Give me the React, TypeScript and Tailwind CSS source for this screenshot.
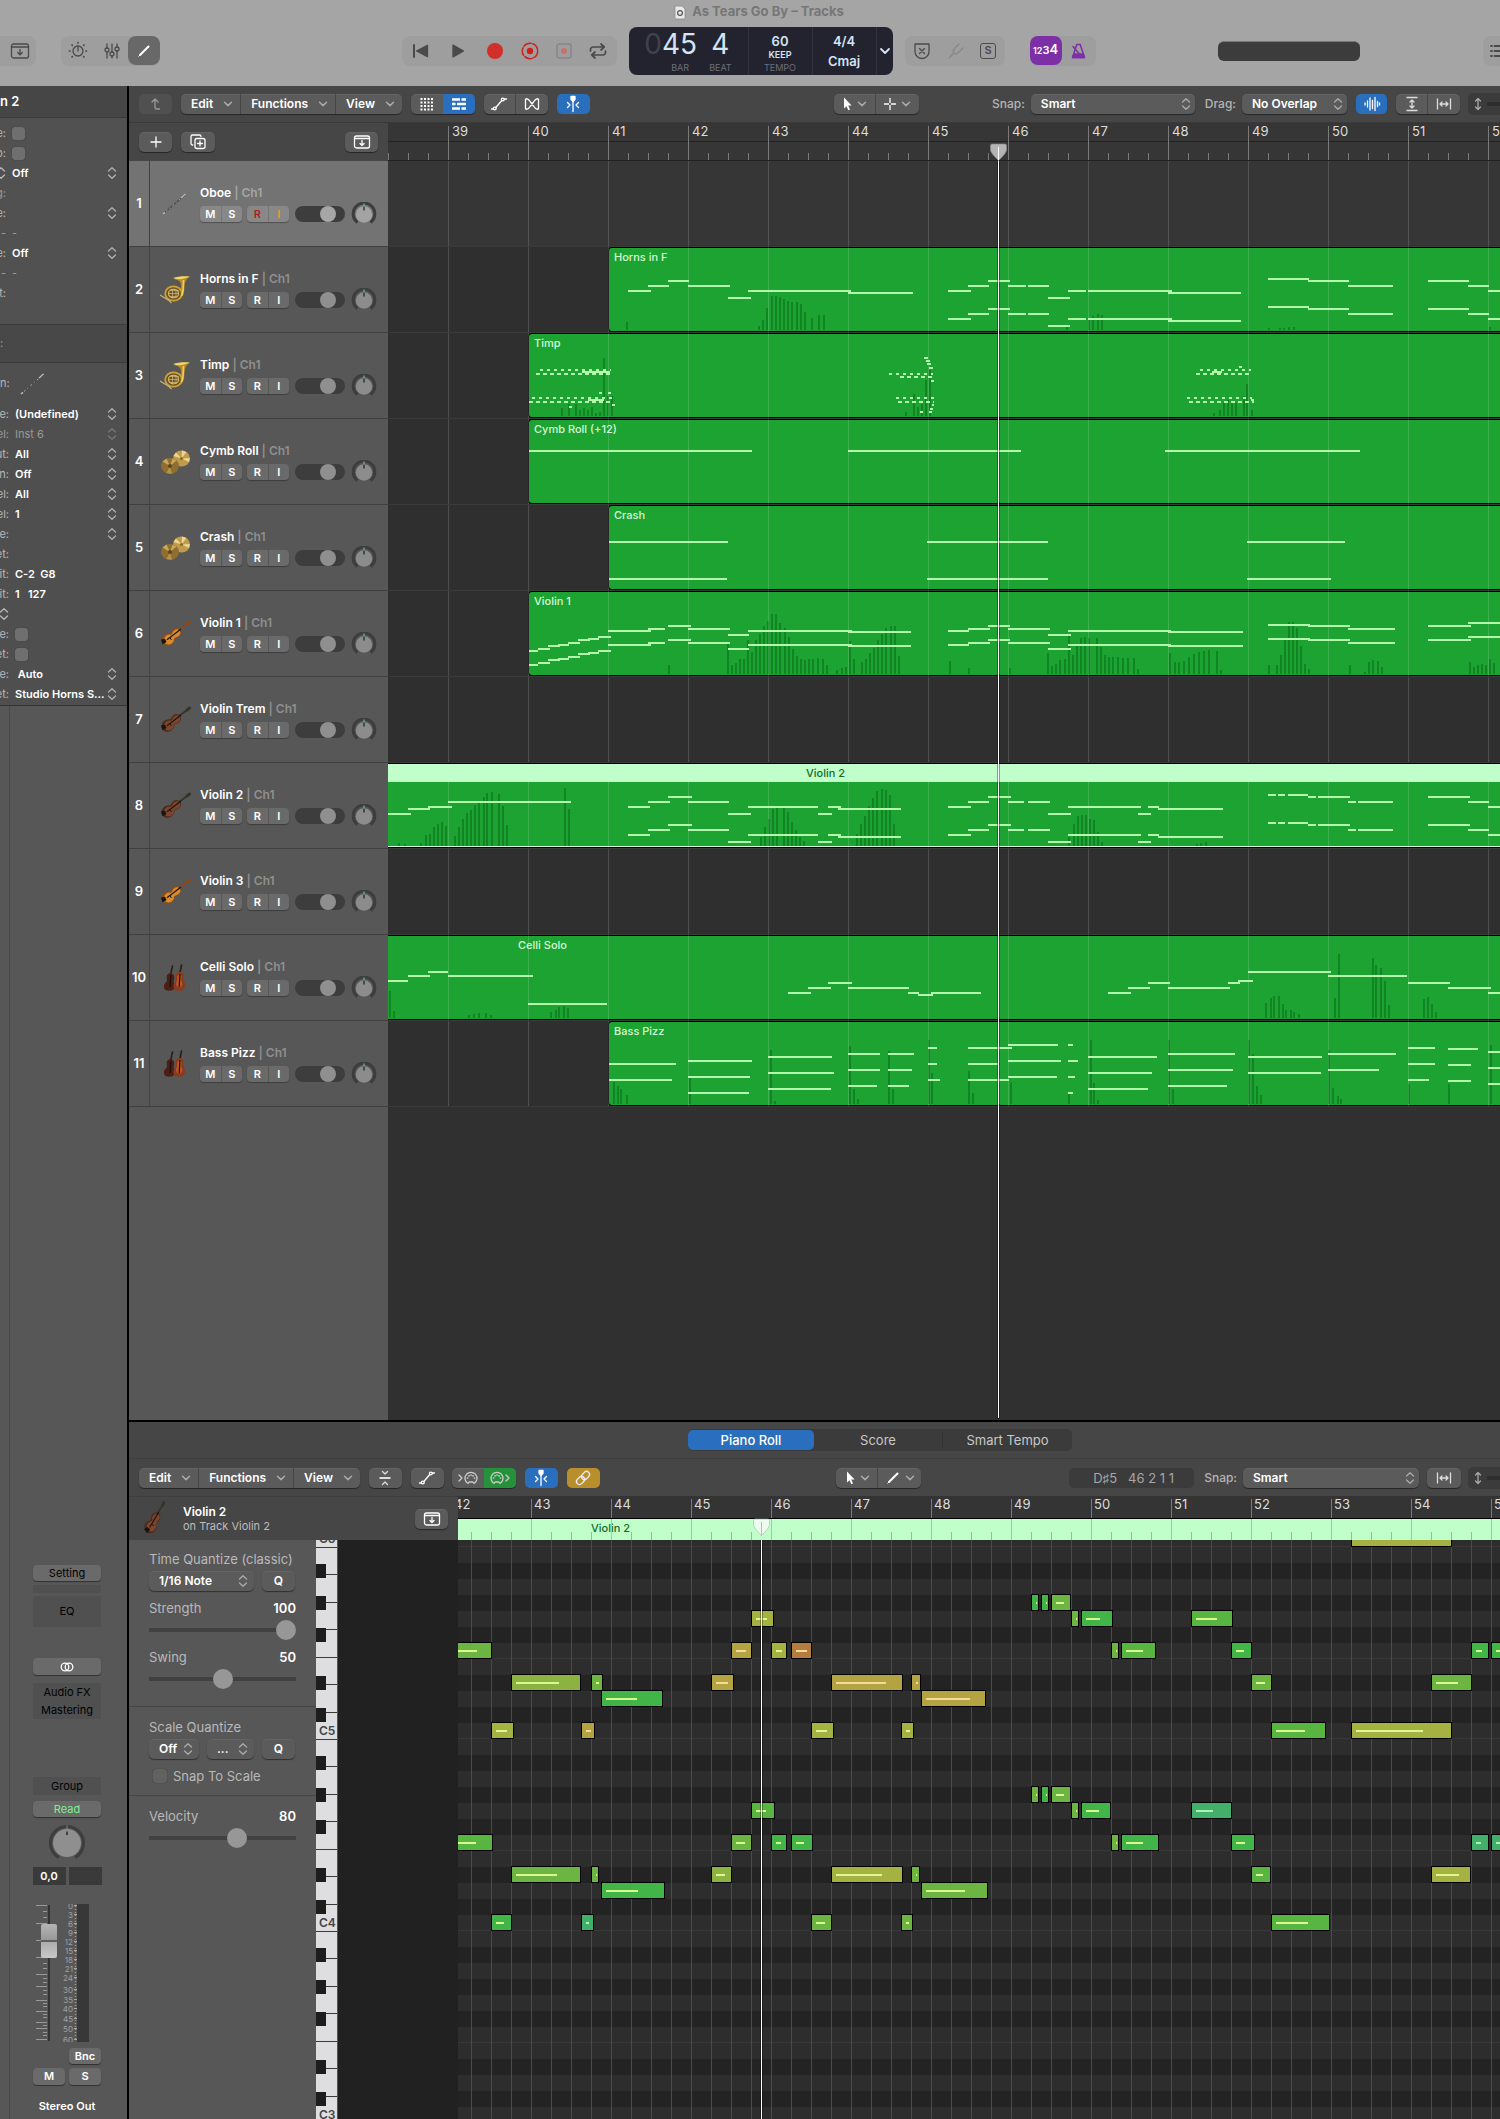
import React from 'react';

type Seg = [number, number, number];
type Bar = [number, number];

interface Track {
  name: string;
  icon: 'oboe' | 'horn' | 'cymbals' | 'violin' | 'darkViolin' | 'celli';
  region?: { label: string; start: number; labelAt?: number; selected?: boolean };
  notes?: Seg[];
  bars?: Bar[];
  dashes?: Seg[];
}

const double = (notes: Seg[], dy: number): Seg[] => [...notes, ...notes.map(([a, b, y]): Seg => [a, b, y + dy])];

const hornsTail: Seg[] = [
  [560, 583, 44], [580, 601, 39], [600, 622, 34], [620, 638, 39], [640, 661, 39], [660, 682, 51], [680, 698, 44],
  [700, 784, 44], [780, 853, 46], [880, 921, 32], [920, 961, 34], [960, 1005, 39], [1040, 1081, 34], [1080, 1101, 39], [1100, 1120, 44],
];

const violin1: Seg[] = [
  [141, 150, 60], [150, 162, 58], [160, 172, 55], [170, 181, 54], [180, 192, 52], [190, 202, 49], [200, 211, 48], [210, 223, 46],
  [220, 263, 40], [260, 277, 38], [280, 303, 35], [300, 342, 38], [340, 361, 44], [360, 464, 40], [460, 523, 41],
  [560, 581, 40], [580, 602, 38], [600, 622, 35], [620, 662, 38], [660, 683, 44], [680, 783, 40], [780, 855, 41],
  [880, 922, 34], [920, 962, 35], [960, 1007, 38], [1040, 1083, 35], [1080, 1120, 32],
];

const violin2: Seg[] = [
  [240, 262, 44], [260, 282, 39], [280, 304, 34], [300, 341, 39], [340, 363, 51], [360, 430, 44], [430, 444, 51], [440, 453, 44], [450, 513, 46],
  [560, 583, 44], [580, 601, 39], [600, 623, 34], [620, 636, 39], [640, 662, 39], [660, 683, 51], [680, 753, 44], [750, 763, 51], [760, 771, 44], [770, 835, 46],
  [880, 888, 32], [890, 897, 32], [900, 920, 32], [920, 928, 34], [930, 962, 34], [960, 968, 39], [970, 1005, 39],
  [1040, 1082, 34], [1080, 1101, 39], [1100, 1120, 44],
];

const tracks: Track[] = [
  { name: 'Oboe', icon: 'oboe' },
  {
    name: 'Horns in F',
    icon: 'horn',
    region: { label: 'Horns in F', start: 220 },
    notes: [[240, 263, 44], [260, 281, 39], [280, 301, 34], [300, 342, 39], [340, 363, 51], [360, 463, 44], [460, 525, 46], ...double(hornsTail, 28)],
    bars: [
      [239, 8], [371, 4], [375, 10], [379, 22], [384, 34], [388, 34], [392, 33], [396, 31], [400, 29], [404, 28], [409, 28], [413, 26], [417, 18],
      [424, 12], [431, 15], [436, 15], [679, 3], [701, 12], [705, 14], [710, 16], [714, 15], [881, 2], [892, 2], [896, 2], [901, 3], [906, 3], [1102, 3],
    ],
  },
  {
    name: 'Timp',
    icon: 'horn',
    region: { label: 'Timp', start: 140 },
    dashes: [
      [152, 223, 37], [148, 223, 41], [144, 224, 65], [141, 225, 69], [501, 545, 41], [512, 545, 44], [508, 546, 65], [510, 546, 69],
      [812, 863, 37], [808, 862, 41], [799, 864, 65], [801, 866, 69],
    ],
    notes: [
      [194, 222, 39], [211, 214, 60], [220, 223, 60], [200, 216, 67], [224, 227, 72], [181, 184, 74], [536, 540, 25], [538, 542, 28], [539, 543, 31],
      [541, 545, 35], [543, 546, 48], [544, 546, 72], [542, 545, 76], [532, 535, 79], [541, 544, 79], [824, 834, 39], [851, 854, 34], [863, 866, 67],
    ],
    bars: [
      [174, 8], [181, 12], [188, 12], [192, 6], [196, 8], [200, 6], [204, 9], [208, 3], [212, 4], [216, 58], [220, 20], [224, 20],
      [518, 4], [526, 22], [530, 9], [534, 12], [538, 36], [542, 46], [826, 3], [832, 6], [836, 14], [840, 16], [844, 14], [848, 13], [856, 20], [859, 32], [864, 6],
    ],
  },
  { name: 'Cymb Roll', icon: 'cymbals', region: { label: 'Cymb Roll (+12)', start: 140 }, notes: [[141, 364, 32], [460, 633, 32], [777, 972, 32]] },
  {
    name: 'Crash',
    icon: 'cymbals',
    region: { label: 'Crash', start: 220 },
    notes: [[221, 340, 37], [221, 339, 74], [539, 660, 37], [539, 660, 74], [859, 957, 37], [859, 943, 74]],
  },
  {
    name: 'Violin 1',
    icon: 'violin',
    region: { label: 'Violin 1', start: 140 },
    notes: double(violin1, 14),
    bars: [
      [281, 9], [340, 32], [344, 9], [348, 11], [352, 15], [356, 15], [360, 34], [364, 22], [368, 34], [372, 40], [376, 48], [380, 53], [384, 60], [388, 60],
      [392, 51], [397, 46], [401, 37], [405, 25], [409, 18], [413, 15], [417, 14], [421, 15], [425, 15], [430, 16], [435, 15], [439, 9], [449, 4], [454, 6], [458, 7],
      [462, 33], [466, 15], [474, 12], [478, 15], [482, 21], [486, 26], [490, 34], [494, 40], [498, 46], [503, 48], [507, 48], [511, 18],
      [562, 13], [581, 6], [622, 6], [660, 21], [664, 8], [668, 10], [672, 14], [677, 15], [681, 38], [685, 19], [689, 28], [693, 36], [697, 37], [701, 36],
      [709, 36], [713, 27], [717, 19], [721, 17], [725, 17], [730, 17], [735, 16], [740, 16], [746, 16], [750, 5], [782, 21], [787, 12], [791, 12], [796, 13],
      [801, 17], [806, 20], [811, 22], [816, 23], [821, 24], [829, 23], [833, 4], [881, 9], [889, 9], [893, 19], [897, 36], [901, 52], [905, 52], [909, 46],
      [913, 28], [917, 10], [921, 5], [962, 9], [977, 2], [981, 12], [985, 14], [990, 13], [994, 7], [1082, 12], [1086, 7], [1090, 9], [1094, 10], [1098, 9], [1102, 15], [1106, 11],
    ],
  },
  { name: 'Violin Trem', icon: 'darkViolin' },
  {
    name: 'Violin 2',
    icon: 'darkViolin',
    region: { label: 'Violin 2', start: 0, labelAt: 418, selected: true },
    notes: [[0, 23, 51], [20, 42, 46], [40, 64, 44], [60, 183, 39], ...double(violin2, 28)],
    bars: [
      [11, 3], [17, 2], [33, 3], [38, 11], [42, 12], [46, 19], [50, 22], [54, 24], [58, 20], [67, 10], [71, 19], [75, 27], [79, 33], [83, 36], [87, 41], [91, 43], [96, 49], [99, 53],
      [104, 54], [111, 52], [115, 40], [119, 21], [177, 58], [181, 37], [373, 9], [377, 19], [381, 27], [385, 37], [389, 38], [396, 38], [400, 34], [404, 24],
      [408, 16], [412, 9], [416, 5], [469, 12], [473, 22], [477, 30], [481, 40], [485, 48], [489, 55], [494, 57], [498, 56], [502, 51], [506, 22],
      [681, 9], [686, 22], [690, 30], [694, 31], [698, 31], [702, 27], [706, 26], [710, 14], [714, 4], [809, 2], [813, 3], [818, 4],
    ],
  },
  { name: 'Violin 3', icon: 'violin' },
  {
    name: 'Celli Solo',
    icon: 'celli',
    region: { label: 'Celli Solo', start: 0, labelAt: 130 },
    notes: [
      [0, 20, 46], [20, 42, 41], [40, 60, 37], [60, 145, 41], [140, 219, 69], [400, 423, 58], [420, 443, 53], [440, 464, 48], [460, 521, 53], [520, 531, 58],
      [530, 545, 60], [543, 593, 58], [720, 743, 58], [740, 762, 53], [760, 782, 48], [780, 842, 53], [840, 852, 48], [850, 865, 46], [860, 943, 37],
      [940, 1019, 41], [1020, 1062, 48], [1060, 1103, 53], [1100, 1120, 58],
    ],
    bars: [
      [2, 27], [6, 7], [81, 3], [86, 4], [91, 5], [98, 5], [103, 3], [163, 6], [168, 8], [171, 11], [176, 12], [180, 10], [878, 15], [883, 20], [886, 22],
      [891, 22], [895, 14], [898, 8], [903, 8], [906, 6], [911, 4], [947, 20], [951, 64], [985, 60], [988, 53], [993, 50], [997, 37], [1001, 13],
      [1036, 19], [1040, 21], [1044, 14], [1048, 6],
    ],
  },
  {
    name: 'Bass Pizz',
    icon: 'celli',
    region: { label: 'Bass Pizz', start: 220 },
    notes: [
      [221, 288, 43], [221, 284, 59], [300, 364, 40], [300, 362, 56], [300, 361, 72], [380, 444, 36], [380, 446, 52], [380, 443, 68],
      [460, 492, 33], [460, 492, 49], [460, 489, 65], [500, 526, 33], [500, 524, 49], [500, 521, 65], [540, 549, 27], [540, 549, 43], [540, 552, 59],
      [580, 624, 27], [580, 610, 43], [580, 621, 59], [620, 670, 24], [620, 673, 40], [620, 669, 56], [680, 685, 24], [680, 690, 40], [680, 687, 56], [680, 685, 72],
      [700, 769, 36], [700, 764, 52], [700, 760, 68], [780, 847, 33], [780, 845, 49], [780, 839, 65], [860, 934, 36], [860, 933, 52],
      [940, 1008, 33], [940, 991, 49], [1020, 1047, 27], [1020, 1047, 43], [1020, 1041, 59], [1060, 1090, 28], [1060, 1083, 44], [1060, 1083, 60],
      [1100, 1120, 31], [1100, 1120, 47], [1100, 1120, 63],
    ],
    bars: [
      [226, 22], [230, 18], [233, 15], [239, 9], [302, 26], [383, 54], [387, 3], [462, 58], [466, 15], [470, 5], [501, 53], [505, 15], [541, 64], [544, 31], [581, 33], [585, 11],
      [623, 22], [681, 11], [703, 64], [706, 21], [710, 4], [781, 64], [785, 15], [861, 64], [865, 50], [869, 18], [873, 9], [941, 54], [945, 16],
      [950, 8], [953, 5], [1021, 20], [1061, 20], [1103, 59],
    ],
  },
];

const barNumbers = (first: number, count: number) => Array.from({ length: count }, (_, i) => first + i);

/* ---------- icons ---------- */

const Icon: React.FC<{ w?: number; h?: number; className?: string; children: React.ReactNode }> = ({ w = 18, h = 18, className = '', children }) => (
  <svg width={w} height={h} viewBox={`0 0 ${w} ${h}`} fill="none" stroke="currentColor" strokeWidth="1.3" strokeLinecap="round" strokeLinejoin="round" className={`shrink-0 ${className}`} aria-hidden="true">
    {children}
  </svg>
);

const Chevron = () => <Icon w={10} h={8} className="text-[#aaa]"><path d="M1.5 2.2 5 5.6l3.5-3.4" strokeWidth="1.5" /></Icon>;
const Stepper = ({ className = '' }: { className?: string }) => (
  <Icon w={10} h={14} className={`pointer-events-none ${className}`}><path d="M1.5 5 5 1.8 8.5 5M1.5 9 5 12.2 8.5 9" /></Icon>
);
const LibraryIcon = () => <Icon w={20} h={18}><rect x="1.5" y="2" width="17" height="14" rx="2" /><path d="M1.5 5h17M10 7.5v5M7.8 10.5l2.2 2.2 2.2-2.2" /></Icon>;
const ArchiveIcon = () => <Icon w={20} h={18}><rect x="2.5" y="3" width="15" height="12" rx="2" /><path d="M2.5 5.5h15M10 7.5v5M8 10.5l2 2 2-2" /></Icon>;
const PointerIcon = () => <Icon w={12} h={16}><path d="M3 1.5v11l2.5-2.3 1.8 4 1.7-.8-1.8-3.9h3.4z" fill="currentColor" stroke="none" /></Icon>;
const PencilIcon = () => <Icon w={16} h={16}><path d="M4 12 12.5 3.5" strokeWidth="2" /><path d="m2.8 13.2 1.2-1.2" strokeWidth="1" /></Icon>;
const AutomationIcon = () => <Icon><path d="M1.5 14h2M5.8 12.5 11.8 5.5M14.2 4h2.3" /><circle cx="4.8" cy="13.5" r="1.4" /><circle cx="12.8" cy="4.5" r="1.4" /></Icon>;
const CatchIcon = () => <Icon><path d="M9 3v13.5M3.5 7.5 6 10l-2.5 2.5M14.5 7.5 12 10l2.5 2.5" /><path d="M7 1.5h4v2.7L9 6.5 7 4.2z" fill="currentColor" /></Icon>;
const WidthIcon = () => <Icon><path d="M2.5 4v10M15.5 4v10M5 9h8M7 7 5 9l2 2M11 7l2 2-2 2" /></Icon>;
const UpDownIcon = () => <Icon w={10} h={16}><path d="M5 2.5v11M2.5 5 5 2.5 7.5 5M2.5 11 5 13.5 7.5 11" /></Icon>;

const Violin: React.FC<{ body: string; edge: string; neck: string }> = ({ body, edge, neck }) => (
  <svg width="32" height="28" viewBox="0 0 32 28" aria-hidden="true">
    <path d="M14 14.5 29.5 3" stroke={neck} strokeWidth="1.8" strokeLinecap="round" />
    <path d="m28 4 2.5-2" stroke={neck} strokeWidth="3" strokeLinecap="round" />
    <g fill={edge}>
      <ellipse cx="9" cy="19.5" rx="6.8" ry="6" transform="rotate(-38 9 19.5)" />
      <ellipse cx="17" cy="13" rx="5.3" ry="4.6" transform="rotate(-38 17 13)" />
      <ellipse cx="13" cy="16.3" rx="4" ry="3.5" transform="rotate(-38 13 16.3)" />
    </g>
    <g fill={body}>
      <ellipse cx="10" cy="19.5" rx="5.2" ry="4.8" transform="rotate(-38 10 19.5)" />
      <ellipse cx="17.3" cy="13.3" rx="4.1" ry="3.5" transform="rotate(-38 17.3 13.3)" />
      <ellipse cx="14" cy="16.3" rx="3.2" ry="2.6" transform="rotate(-38 14 16.3)" />
    </g>
    <path d="M8 19.7 22 9" stroke="#1f1612" strokeWidth="1.2" />
    <path d="m2 19.5 4-.8 1.5 3.300-4 2.300z" fill="#191412" />
    <path d="m10.500 17 2 3" stroke="#2b1a10" strokeWidth="1" />
  </svg>
);

const Instrument: React.FC<{ kind: Track['icon'] }> = ({ kind }) => {
  if (kind === 'violin') return <Violin body="#d98a2c" edge="#8f4d15" neck="#8a4a1c" />;
  if (kind === 'darkViolin') return <Violin body="#7c452c" edge="#4b291c" neck="#34352a" />;
  if (kind === 'oboe')
    return (
      <svg width="32" height="28" viewBox="0 0 32 28" aria-hidden="true">
        <path d="M4 24 27 4" stroke="#4a4a4c" strokeWidth="1.6" />
        <path d="M4 24 27 4" stroke="#b5b5b8" strokeWidth="1" strokeDasharray="1 3 2 2.5" />
        <path d="m22 8 4.5-4" stroke="#bdbdbf" strokeWidth="1.2" />
        <path d="m4 24 2-1.700" stroke="#bdbdbf" strokeWidth="1.6" />
      </svg>
    );
  if (kind === 'horn')
    return (
      <svg width="32" height="30" viewBox="0 0 32 30" fill="none" aria-hidden="true">
        <path d="M15 4c4-2 11-2 16-2-3 1-4 3-5 6-1 4 0 11-3 14-2 3-6 3-8 2 4-4 7-9 7-14 0-3-2-5-7-6z" stroke="none" fill="#b98a22" />
        <path d="M14 3C18 1.300 26 1 31 1.500c-3 1-5 2-8 2.500-3 .4-6 .2-9-1z" fill="#f2d766" />
        <ellipse cx="14.5" cy="18.5" rx="8.3" ry="7.2" fill="#6a5628" stroke="#cfa034" strokeWidth="1.8" />
        <ellipse cx="14.5" cy="18.5" rx="5" ry="4.3" stroke="#d9bf74" strokeWidth="1.1" />
        <path d="M10 15.5h10M9.5 18.5h10M10.5 21.5h8M13.5 14v9.5M17 14v9" stroke="#c8ad70" strokeWidth=".8" />
        <path d="m1 20 9 5.5 2.5 2.5" stroke="#c4b283" strokeWidth="1.2" />
        <path d="M24.5 5c-.5 5.5.5 11-2 16" stroke="#efcf58" strokeWidth="1.6" />
      </svg>
    );
  if (kind === 'cymbals')
    return (
      <svg width="32" height="28" viewBox="0 0 32 28" aria-hidden="true">
        <ellipse cx="22.5" cy="10.5" rx="8.5" ry="8" fill="#bf9b4b" />
        <path d="m22.500 10.500-8-2.500 2.500-3.500 5.500 6 .5-8 4.500 1.500-5 6.500 8.300-.5-.8 4z" fill="#ead592" />
        <circle cx="22.5" cy="10.5" r="1.6" fill="#8b6a24" />
        <ellipse cx="11" cy="18" rx="9" ry="8" fill="#8f6f31" />
        <path d="m11 18-7.500-4.500 4-3L11 18l2.500-7.500 4 2z" fill="#c8a75b" />
        <path d="M11 18 7.500 25l5.500 1z" fill="#b5924a" />
        <circle cx="11" cy="18" r="2" fill="#5f4618" />
      </svg>
    );
  return (
    <svg width="32" height="30" viewBox="0 0 32 30" aria-hidden="true">
      <path d="M11.5 12 13.5 3M20.5 12 22.5 2" stroke="#2b1d17" strokeWidth="1.6" strokeLinecap="round" />
      <path d="M9 11c3-2 5-1 6 2s-1 4 0 7 1 7-3 7.500-7 0-7-4 3-3.500 3-6.500-1-4 1-6z" fill="#4b1f14" />
      <path d="M18 10c3-2 6-1 6.500 1s-1 4 0 6.500c2 3 2.500 8-1 9.500s-8.500 1-9-3 2.500-5 2.500-7.500-1-4.500 1-6.500z" fill="#8c391d" />
      <path d="M19.200 12c1.500-1 3 0 3.300 1.500s-1 2.500 0 4.500 1.500 5-1 6-4.500-.5-4.500-3 1.700-3.500 1.200-5 0-3 1-4z" fill="#b85628" />
      <path d="m21 11-.8 13M12 12l-1 12" stroke="#1a100c" strokeWidth="1.2" />
    </svg>
  );
};

/* ---------- shared controls ---------- */

const raised = 'bg-[#5b5b5b] shadow-[0_1px_1px_rgba(0,0,0,0.45),inset_0_1px_0_rgba(255,255,255,0.06)] rounded-[5px]';
const stripButton = 'bg-[#6a6a6a] shadow-[0_1px_1px_rgba(0,0,0,0.45)] rounded-[4px]';

const ToolButton: React.FC<{ label: string; className?: string; children: React.ReactNode }> = ({ label, className = '', children }) => (
  <button aria-label={label} className={`flex h-5 items-center justify-center ${className}`}>{children}</button>
);

const MenuBar = () => (
  <div className={`flex divide-x divide-[#474747] ${raised}`}>
    {['Edit', 'Functions', 'View'].map(m => (
      <button key={m} className="flex h-5 items-center gap-2.5 pl-[10px] pr-[7px] text-xs font-semibold text-white">
        {m}
        <Chevron />
      </button>
    ))}
  </div>
);

const Picker: React.FC<{ label: string; value: string; className?: string; arrows?: string }> = ({ label, value, className = '', arrows = 'right-1' }) => (
  <span className={`relative flex h-5 items-center ${raised} ${className}`}>
    <select aria-label={label} className="h-full w-full appearance-none bg-transparent pl-[10px] text-xs font-semibold text-white outline-none">
      <option>{value}</option>
    </select>
    <Stepper className={`absolute text-[#aaa] ${arrows}`} />
  </span>
);

const PointerTools: React.FC<{ second: React.ReactNode }> = ({ second }) => (
  <div className={`flex divide-x divide-[#474747] text-white ${raised}`}>
    <ToolButton label="Left-click tool" className="w-[42px] gap-1"><PointerIcon /><Chevron /></ToolButton>
    <ToolButton label="Command-click tool" className="w-[43px] gap-1">{second}<Chevron /></ToolButton>
  </div>
);

const ZoomSlider = () => (
  <div className="flex h-[22px] w-8 shrink-0 items-center gap-1 rounded-l-[5px] bg-[#3b3b3b] pl-[5px] text-[#aaa]">
    <UpDownIcon />
    <span className="h-1 flex-1 bg-[#2d2d2d]" />
  </div>
);

const Knob: React.FC<{ bright?: boolean }> = ({ bright }) => (
  <svg width="26" height="24" viewBox="0 0 26 24" className="shrink-0" aria-hidden="true">
    <path d="M6.5 20.5A10.8 10.8 0 1 1 19.5 20.5" fill="none" stroke="#3d3d3d" strokeWidth="3" />
    <circle cx="13" cy="12.5" r="8.3" fill={bright ? '#a3a3a3' : '#8c8c8c'} />
    <path d="M13 1.5V5" stroke="#7fc9ae" strokeWidth="1" />
    <path d="M13 4.5V8.5" stroke="#111" strokeWidth="1.1" />
  </svg>
);

/* ---------- top bar ---------- */

const TopBar = () => (
  <header className="flex h-[86px] shrink-0 flex-col bg-[#a5a5a5] text-[#4a4a4a]">
    <div className="flex h-6 items-center justify-center gap-1.5 pl-[18px] text-[13px] font-bold text-[#767676]">
      <svg width="12" height="15" viewBox="0 0 12 15" aria-hidden="true"><path d="M1 1h7l3 3v10H1z" fill="#e9e9e9" stroke="#8b8b8b" strokeWidth=".8" /><circle cx="6" cy="8" r="2.4" fill="none" stroke="#555" strokeWidth="1.2" /></svg>
      As Tears Go By – Tracks
    </div>
    <div className="flex flex-1 items-center pb-[9px]">
      <div className="flex h-[30px] w-9 items-center justify-center rounded-r-lg bg-[#9e9e9e] pl-1"><ToolButton label="Library"><LibraryIcon /></ToolButton></div>
      <div className="ml-[25px] flex h-[30px] items-center rounded-lg bg-[#9e9e9e]">
        <ToolButton label="Smart Controls" className="w-[34px]">
          <Icon w={20} h={20}><circle cx="10" cy="10" r="5" /><path d="M10 6.5V10" /><path d="M10 1.5v.5M4 4l.3.3M16 4l-.3.3M1.5 10H2M18 10h.5M4 16l.3-.3M16 16l-.3-.3" strokeWidth="1.7" /></Icon>
        </ToolButton>
        <ToolButton label="Mixer" className="w-[33px]">
          <Icon><path d="M4 2v4M4 10v6M9 2v8M9 14v2M14 2v3M14 9v7" /><circle cx="4" cy="8" r="2" /><circle cx="9" cy="12" r="2" /><circle cx="14" cy="7" r="2" /></Icon>
        </ToolButton>
        <button aria-label="Editors" className="flex h-[29px] w-8 items-center justify-center rounded-lg bg-[#686868] text-white"><PencilIcon /></button>
      </div>
      <span className="grow-[61]" />
      <div className="flex h-[30px] items-center justify-around rounded-lg bg-[#9e9e9e] px-0.5">
        <ToolButton label="Go to beginning" className="w-[35px]"><Icon><path d="M2 3v12" strokeWidth="2" /><path d="M15.5 3.2v11.6L4.5 9z" fill="currentColor" /></Icon></ToolButton>
        <ToolButton label="Play" className="w-[38px]"><Icon><path d="M4 3v12l10.5-6z" fill="currentColor" /></Icon></ToolButton>
        <ToolButton label="Record" className="w-[36px]"><Icon><circle cx="9" cy="9" r="8" fill="#d02f2a" stroke="none" /></Icon></ToolButton>
        <ToolButton label="Capture recording" className="w-[34px]"><Icon><circle cx="9" cy="9" r="7.7" stroke="#cf1f1c" strokeWidth="1.5" strokeDasharray="8 1.7" /><circle cx="9" cy="9" r="3.2" fill="#cf1f1c" stroke="none" /></Icon></ToolButton>
        <ToolButton label="Replace" className="w-[34px]"><Icon className="text-[#858585]"><rect x="2" y="2" width="14" height="14" rx="2" /><circle cx="9" cy="9" r="3" fill="#c9716e" stroke="none" /></Icon></ToolButton>
        <ToolButton label="Cycle" className="w-[34px]"><Icon w={20}><path d="M2.5 9V7.5a2.5 2.5 0 0 1 2.5-2.5h11M13 2l3.3 3L13 8M17.5 9v1.5a2.5 2.5 0 0 1-2.5 2.5H4M7 10l-3.3 3L7 16" strokeWidth="1.7" /></Icon></ToolButton>
      </div>
      <div className="ml-3 flex h-12 items-stretch rounded-lg bg-[#22232e] text-[#d4e4f5]">
        <div className="flex w-[120px] justify-center gap-3 border-r border-[#31323d]">
          <div className="flex flex-col items-end">
            <span className="text-[28px] leading-[35px]"><span className="text-[#40424d]">0</span>45</span>
            <span className="pr-2 text-[9px] leading-[11px] text-[#6c6f7b]">BAR</span>
          </div>
          <div className="flex flex-col items-center">
            <span className="text-[28px] leading-[35px]">4</span>
            <span className="text-[9px] leading-[11px] text-[#6c6f7b]">BEAT</span>
          </div>
        </div>
        <div className="flex w-16 flex-col items-center border-r border-[#31323d] pt-1.5">
          <span className="text-[13px] font-semibold leading-4">60</span>
          <span className="text-[9px] font-semibold leading-3">KEEP</span>
          <span className="text-[9px] leading-[14px] text-[#6c6f7b]">TEMPO</span>
        </div>
        <div className="flex w-16 flex-col items-center gap-1 border-r border-[#31323d] pt-1.5 text-[13px] font-semibold leading-4">
          <span>4/4</span>
          <span>Cmaj</span>
        </div>
        <ToolButton label="Display mode" className="w-4 self-center"><Icon w={12} h={12}><path d="m2 4 4 4 4-4" strokeWidth="1.8" /></Icon></ToolButton>
      </div>
      <div className="ml-3 flex h-[30px] items-center rounded-lg bg-[#9e9e9e]">
        <ToolButton label="Replace mode" className="w-[35px]"><Icon><path d="M2 2h14v8c0 4-4 6.5-7 6.5S2 14 2 10zM6.5 6.5l5 5M11.5 6.5l-5 5" /></Icon></ToolButton>
        <ToolButton label="Tuner" className="w-[32px]"><Icon className="text-[#8a8a8a]"><path d="m2 16 5-5M7 11C5.5 9 6 8 7.5 6.5L12 2M7 11c2 1.5 3 1 4.5-.5L16 6" strokeWidth="1.6" /></Icon></ToolButton>
        <ToolButton label="Solo" className="w-[33px]"><span className="flex h-4 w-4 items-center justify-center rounded-[3px] border border-[#4a4a4a] text-[11px] font-semibold">S</span></ToolButton>
      </div>
      <div className="ml-[25px] flex h-[30px] items-center rounded-lg bg-[#9e9e9e]">
        <button aria-label="Count-in" className="flex h-[29px] w-8 items-baseline justify-center rounded-lg bg-[#7d2fa6] pt-1 font-semibold text-white">
          <span className="text-[9px]">12</span><span className="text-[11px]">3</span><span className="text-[13px]">4</span>
        </button>
        <ToolButton label="Metronome" className="w-[34px] text-[#7d2fa6]"><Icon><path d="M6.8 2.5h3.4L14.5 15.5h-12zM3.8 12h9.7" strokeWidth="1.5" /><path d="M3 4.5 9 11.5" strokeWidth="1.5" /><path d="M3.5 13h10.3l.7 2.5h-12z" fill="currentColor" /></Icon></ToolButton>
      </div>
      <span className="grow-[31]" />
      <div className="h-5 w-[142px] rounded-md border-t border-[#777] bg-[#3c3c3c]" />
      <span className="grow-[31]" />
      <div className="flex h-[30px] w-[17px] items-center overflow-hidden rounded-l-lg bg-[#9e9e9e] pl-[7px]">
        <ToolButton label="List editors"><Icon><path d="M1 4h1M1 9h1M1 14h1M4.5 4h12M4.5 9h12M4.5 14h12" strokeWidth="1.8" /></Icon></ToolButton>
      </div>
    </div>
  </header>
);

/* ---------- inspector ---------- */

interface Field {
  label: string;
  value?: string;
  kind?: 'check' | 'select' | 'text';
  dim?: boolean;
}

const regionFields: Field[] = [
  { label: 'e:', kind: 'check' },
  { label: 'p:', kind: 'check' },
  { label: '◊', value: 'Off', kind: 'select' },
  { label: 'g:', dim: true },
  { label: 'e:', value: '', kind: 'select' },
  { label: '-', value: '-', kind: 'text', dim: true },
  { label: 'e:', value: 'Off', kind: 'select' },
  { label: '-', value: '-', kind: 'text', dim: true },
  { label: 't:' },
];

const trackFields: Field[] = [
  { label: 'e:', value: '(Undefined)', kind: 'select' },
  { label: 'el:', value: 'Inst 6', kind: 'select', dim: true },
  { label: 'ut:', value: 'All', kind: 'select' },
  { label: 'n:', value: 'Off', kind: 'select' },
  { label: 'el:', value: 'All', kind: 'select' },
  { label: 'el:', value: '1', kind: 'select' },
  { label: 'e:', value: '', kind: 'select' },
  { label: 'et:' },
  { label: 'it:', value: 'C-2  G8', kind: 'text' },
  { label: 'it:', value: '1   127', kind: 'text' },
  { label: '◊' },
  { label: 'e:', kind: 'check' },
  { label: 'et:', kind: 'check' },
  { label: 'e:', value: '\u00a0Auto', kind: 'select' },
  { label: 'et:', value: 'Studio Horns S...', kind: 'select' },
];

const FieldRow: React.FC<{ field: Field; id: string; labelWidth: string }> = ({ field, id, labelWidth }) => (
  <div className={`flex h-5 items-center gap-1.5 pr-[10px] text-[11px] ${field.dim ? 'text-[#9a9a9a]' : 'text-white'}`}>
    <label htmlFor={id} className={`flex shrink-0 justify-end whitespace-nowrap ${labelWidth} ${field.dim ? '' : 'text-[#b8b8b8]'}`}>
      {field.label === '◊' ? <Stepper /> : field.label}
    </label>
    {field.kind === 'check' && <input id={id} type="checkbox" className="h-[13px] w-[13px] appearance-none rounded-[3px] bg-[#6f6f6f] shadow-[0_0_1px_#222]" />}
    {field.kind === 'text' && <output id={id} className={`whitespace-pre ${field.dim ? '' : 'font-semibold'}`}>{field.value}</output>}
    {field.kind === 'select' && (
      <span className="relative flex flex-1 items-center">
        <select id={id} className={`w-full appearance-none bg-transparent outline-none ${field.dim ? '' : 'font-semibold'}`}><option>{field.value}</option></select>
        <Stepper className={`absolute right-0 ${field.dim ? 'text-[#777]' : 'text-[#b0b0b0]'}`} />
      </span>
    )}
  </div>
);

const faderMarks: [string, number][] = [
  ['0', 2], ['3', 11], ['6', 20], ['9', 29], ['12', 38], ['15', 47], ['18', 56], ['21', 65], ['24', 74], ['30', 86], ['35', 96], ['40', 105], ['45', 115], ['50', 125], ['60', 136],
];
const faderTicks: [number, number][] = [
  [2, 11], [8, 4], [14, 4], [20, 11], [37, 11], [54, 11], [60, 4], [65, 4], [71, 11], [75, 4], [79, 4], [83, 11], [87, 4], [91, 4], [97, 11], [100, 4], [103, 4], [108, 11], [111, 4], [114, 4], [119, 11], [122, 4], [125, 11], [129, 4], [132, 4], [136, 11],
];

const ChannelStrip = () => (
  <div className="ml-[9px] flex flex-1 flex-col items-center justify-end border-l border-[#484848] pb-[5px] pr-[3px] text-[11px] text-black">
    <button className={`h-4 w-[68px] leading-4 ${stripButton}`}>Setting</button>
    <div className="mt-1 h-2 w-[68px] bg-[#505050]" />
    <button className="mt-[3px] h-[31px] w-[68px] bg-[#505050]">EQ</button>
    <button aria-label="Stereo" className={`mt-[31px] flex h-[17px] w-[68px] items-center justify-center text-white ${stripButton}`}>
      <Icon w={14} h={10}><circle cx="5" cy="5" r="3.8" /><circle cx="9" cy="5" r="3.8" /></Icon>
    </button>
    <div className="mt-2 flex h-9 w-[68px] flex-col items-center bg-[#505050] leading-[18px]"><span>Audio FX</span><span>Mastering</span></div>
    <button className="mt-[58px] h-[18px] w-[68px] bg-[#505050]">Group</button>
    <button className={`mt-1.5 h-4 w-[68px] leading-4 text-[#7df08e] ${stripButton}`}>Read</button>
    <svg width="38" height="36" viewBox="0 0 38 36" className="mt-2" aria-hidden="true">
      <path d="M11 32.5A16.5 16.5 0 1 1 27 32.5" fill="none" stroke="#3d3d3d" strokeWidth="3" />
      <circle cx="19" cy="18" r="14" fill="#8f8f8f" />
      <path d="M19 .5v4" stroke="#888" />
      <path d="M19 6.5v3.5" stroke="#111" strokeWidth="1.2" />
    </svg>
    <div className="mt-1.5 flex gap-[3px]">
      <output className="h-[18px] w-[33px] bg-[#3a3a3a] text-center font-semibold leading-[18px] text-white">0,0</output>
      <output className="h-[18px] w-[33px] bg-[#3a3a3a]" />
    </div>
    <div className="relative mt-[19px] h-[138px] w-[68px]">
      <svg width="68" height="138" viewBox="0 0 68 138" className="block" aria-hidden="true">
        <rect x="15" y="1" width="2" height="136" fill="#333" />
        {faderTicks.map(([y, w]) => <rect key={y} x={14 - w} y={y - 1} width={w} height="1" fill="#999" />)}
        <rect x="44" y="0" width="12" height="138" fill="#383838" />
        <path d="M42.5 2v134" stroke="#999" strokeWidth="1.5" strokeDasharray="1 2" />
        {faderMarks.map(([t, y]) => (
          <g key={t}>
            <rect x="41" y={y - 1} width="3" height="1" fill="#aaa" />
            <text x="40" y={y + 3} textAnchor="end" fontSize="8" fill="#a0a0a0">{t}</text>
          </g>
        ))}
      </svg>
      <input aria-label="Volume" type="range" min={0} max={100} defaultValue={81} className="absolute left-2 top-0 h-[138px] w-4 appearance-none bg-transparent [direction:rtl] [writing-mode:vertical-lr] [&::-webkit-slider-thumb]:h-[34px] [&::-webkit-slider-thumb]:w-4 [&::-webkit-slider-thumb]:appearance-none [&::-webkit-slider-thumb]:rounded-[2px] [&::-webkit-slider-thumb]:bg-[linear-gradient(#b5b5b5,#989898_46%,#5f5f5f_48%,#5f5f5f_52%,#adadad_54%,#c8c8c8)]" />
    </div>
    <div className="mt-1.5 flex w-[68px] justify-end"><button className={`h-4 w-8 font-semibold leading-4 text-white ${stripButton}`}>Bnc</button></div>
    <div className="mt-1 flex w-[68px] justify-between font-semibold text-white">
      <button className={`h-[17px] w-8 leading-[17px] ${stripButton}`}>M</button>
      <button className={`h-[17px] w-8 leading-[17px] ${stripButton}`}>S</button>
    </div>
    <div className="mt-[13px] font-semibold leading-4 text-white">Stereo Out</div>
  </div>
);

const Inspector = () => (
  <aside className="flex w-[129px] shrink-0 flex-col border-r-2 border-black bg-[#575757]">
    <h2 className="flex h-8 items-center border-b border-[#3a3a3a] bg-[#464646] text-[13px] font-semibold text-white">n 2</h2>
    <div className="bg-[#515151] pb-[21px] pt-[5px]">
      {regionFields.map((f, i) => <FieldRow key={i} field={f} id={`region-${i}`} labelWidth="w-1.5" />)}
    </div>
    <div className="flex h-[39px] items-center border-y border-[#3a3a3a] bg-[#484848] text-[11px] text-[#999]">:</div>
    <div className="border-b border-[#333] bg-[#4f4f4f] pb-px">
      <div className="flex h-[41px] items-center gap-2 text-[11px] text-[#b8b8b8]">
        <span className="w-[9px] text-right">n:</span>
        <Instrument kind="oboe" />
      </div>
      {trackFields.map((f, i) => <FieldRow key={i} field={f} id={`track-${i}`} labelWidth="w-[9px]" />)}
    </div>
    <ChannelStrip />
  </aside>
);

/* ---------- tracks ---------- */

const TracksToolbar = () => (
  <div className="flex h-[37px] items-center border-b border-[#3a3a3a] bg-[#464646] pl-2.5">
    <ToolButton label="Up" className="w-[33px] rounded-[5px] bg-[#505050] text-[#999]"><Icon><path d="M9.5 14h3M9.5 14c-1 0-1.5-1-1.5-2V4M5 7l3-3 3 3" /></Icon></ToolButton>
    <div className="ml-[9px]"><MenuBar /></div>
    <div className={`ml-[9px] flex overflow-hidden text-white ${raised}`}>
      <ToolButton label="Live loops grid" className="w-8"><Icon><path d="M2.5 4h13M2.5 7.5h13M2.5 11h13M2.5 14.5h13" strokeWidth="2" strokeLinecap="butt" strokeDasharray="2 1.5" /></Icon></ToolButton>
      <ToolButton label="Tracks view" className="w-8 bg-[#2a6fbd]"><Icon><path d="M2 4.5h8M11.5 4.5h4.5M2 9h3.5M7 9h9M2 13.5h8M11.5 13.5h4.5" strokeWidth="2.6" strokeLinecap="butt" /></Icon></ToolButton>
    </div>
    <div className={`ml-[9px] flex divide-x divide-[#474747] text-white ${raised}`}>
      <ToolButton label="Automation" className="w-8"><AutomationIcon /></ToolButton>
      <ToolButton label="Flex" className="w-8"><Icon><path d="M2.5 4v10c1.5.7 3.5-.5 5-3l3-4c1.5-2.5 3.5-3.7 5-3v10c-1.5.7-3.5-.5-5-3l-3-4c-1.5-2.5-3.5-3.7-5-3z" /></Icon></ToolButton>
    </div>
    <ToolButton label="Catch playhead" className="ml-[9px] w-[33px] rounded-[5px] bg-[#2a6fbd] text-white"><CatchIcon /></ToolButton>
    <span className="grow-[10]" />
    <PointerTools second={<Icon w={14} h={14}><path d="M7 1.5v4M7 8.5v4M1.5 7h4M8.5 7h4" /></Icon>} />
    <span className="grow-[3]" />
    <span className="text-xs font-medium text-[#b4b4b4]">Snap:</span>
    <Picker label="Snap" value="Smart" className="ml-1.5 w-[164px]" />
    <span className="ml-[10px] text-xs font-medium text-[#b4b4b4]">Drag:</span>
    <Picker label="Drag" value="No Overlap" className="ml-1.5 w-[105px]" />
    <ToolButton label="Waveform zoom" className="ml-[9px] w-[31px] rounded-[5px] bg-[#2a6fbd] text-white"><Icon><path d="M2 8v2M4.5 6v6M7 3v12M9.5 5.5v8M12 2.5v13M14.5 6.5v5M16.5 8v2" /></Icon></ToolButton>
    <div className={`ml-[9px] flex divide-x divide-[#474747] text-[#ddd] ${raised}`}>
      <ToolButton label="Fit height" className="w-8"><Icon><path d="M4 2.5h10M4 15.5h10M9 5v8M7 7l2-2 2 2M7 11l2 2 2-2" /></Icon></ToolButton>
      <ToolButton label="Fit width" className="w-8"><WidthIcon /></ToolButton>
    </div>
    <div className="ml-2"><ZoomSlider /></div>
  </div>
);

const TrackHeader: React.FC<{ track: Track; index: number }> = ({ track, index }) => {
  const active = index === 0;
  const pair = `flex h-4 w-[42px] divide-x rounded-[4px] text-[11px] font-semibold leading-4 text-white shadow-[0_1px_1px_rgba(0,0,0,0.3)] ${active ? 'divide-[#757575] bg-[#888]' : 'divide-[#575757] bg-[#6a6a6a]'}`;
  return (
    <li className={`flex h-[86px] border-b border-[#404040] ${active ? 'bg-[#737373]' : 'bg-[#575757]'}`}>
      <span className="flex w-[21px] items-center justify-center border-r border-[#424242] text-[13px] font-semibold text-white">{index + 1}</span>
      <span className="flex w-[50px] items-center justify-center"><Instrument kind={track.icon} /></span>
      <div className="flex flex-col justify-center gap-1 pb-0.5">
        <div className="whitespace-pre text-xs font-semibold leading-[18px] text-white">{track.name} <span className={active ? 'text-[#a5a5a5]' : 'text-[#8f8f8f]'}>| Ch1</span></div>
        <div className="flex h-4 items-center">
          <div className={pair}><button className="flex-1">M</button><button className="flex-1">S</button></div>
          <div className={`ml-[5px] ${pair}`}><button className={`flex-1 ${active ? 'text-[#b3201c]' : ''}`}>R</button><button className={`flex-1 ${active ? 'text-[#e59b2c]' : ''}`}>I</button></div>
          <input aria-label={`${track.name} volume`} type="range" defaultValue={74} className={`ml-1.5 h-4 w-[50px] appearance-none rounded-full bg-[#3d3d3d] [&::-webkit-slider-thumb]:h-4 [&::-webkit-slider-thumb]:w-4 [&::-webkit-slider-thumb]:appearance-none [&::-webkit-slider-thumb]:rounded-full ${active ? '[&::-webkit-slider-thumb]:bg-[#a6a6a6]' : '[&::-webkit-slider-thumb]:bg-[#8f8f8f]'}`} />
          <span className="ml-1.5"><Knob bright={active} /></span>
        </div>
      </div>
    </li>
  );
};

const Lane: React.FC<{ track: Track; index: number }> = ({ track, index }) => {
  const { region, notes = [], bars = [], dashes = [] } = track;
  return (
    <div className={`relative h-[86px] overflow-hidden border-b border-[#3a3a3a] ${index === 0 ? 'bg-[#363636]' : 'bg-[#2f2f2f]'}`}>
      {region && (
        <div className={`absolute inset-y-0 right-0 overflow-hidden border-y border-black bg-[#1da332] ${region.start ? 'rounded-l-[4px] border-l' : ''}`} style={{ left: region.start }}>
          <div className={`h-[18px] text-[11px] font-medium leading-[18px] ${region.selected ? 'bg-[#c0ffca] text-[#17692a]' : 'text-[#d6f7d6]'}`} style={{ paddingLeft: region.labelAt ?? 5 }}>{region.label}</div>
        </div>
      )}
      <svg className="absolute inset-0 h-full w-full" aria-hidden="true">
        {bars.map(([x, h]) => <rect key={x} x={x - 1} y={83 - h} width="2" height={h} fill="#118524" />)}
        {barNumbers(0, 30).map(i => <rect key={i} x={60 + i * 80} y={region?.selected ? 19 : 0} width="1" height="86" fill="#fff" opacity="0.15" />)}
        {notes.map(([a, b, y], i) => <rect key={i} x={a} y={y - 1} width={b - a} height="2" fill="#b4f8ae" />)}
        {dashes.map(([a, b, y], i) => <path key={i} d={`M${a} ${y}H${b}`} stroke="#b4f8ae" strokeWidth="2" strokeDasharray={i % 2 ? '4 3' : '3 4'} />)}
        {region?.selected && <rect x="0" y="83" width="100%" height="1" fill="#d5ffda" />}
      </svg>
    </div>
  );
};

const PlayheadMarker: React.FC<{ light?: boolean }> = ({ light }) => (
  <svg width="17" height="18" viewBox="0 0 17 18" className="block" aria-hidden="true">
    <path d="M.5 2.5Q.5 1 2 1h13q1.5 0 1.5 1.5V7q0 3-8 10.5Q.5 10 .5 7z" fill={light ? '#eefcf0' : '#b5b5b5'} stroke={light ? '#a9c4ad' : '#8a8a8a'} strokeWidth=".7" />
    <path d="M8.5 4v14" stroke={light ? '#bbb' : '#fff'} />
  </svg>
);

const TracksArea = () => (
  <section className="flex flex-1 flex-col border-b-2 border-black">
    <TracksToolbar />
    <div className="flex flex-1">
      <div className="flex w-[259px] shrink-0 flex-col bg-[#575757]">
        <div className="flex h-[38px] items-center bg-[#464646] pl-2.5 pr-2.5 text-white">
          <ToolButton label="Add track" className={`w-[33px] ${raised}`}><Icon><path d="M9 4v10M4 9h10" /></Icon></ToolButton>
          <ToolButton label="Duplicate track" className={`ml-[9px] w-[34px] ${raised}`}><Icon><rect x="6" y="5.5" width="10" height="10" rx="2" /><path d="M3.8 12H3.5A1.5 1.5 0 0 1 2 10.5v-7A1.5 1.5 0 0 1 3.5 2h7A1.5 1.5 0 0 1 12 3.3M11 8v5M8.5 10.5h5" /></Icon></ToolButton>
          <ToolButton label="Track archive" className={`ml-auto w-[33px] ${raised}`}><ArchiveIcon /></ToolButton>
        </div>
        <ol>{tracks.map((t, i) => <TrackHeader key={t.name} track={t} index={i} />)}</ol>
      </div>
      <div className="relative min-w-0 flex-1 overflow-hidden bg-[#303030]">
        <div className="relative h-[38px] overflow-hidden border-b border-[#222] bg-[#363636]">
          <svg className="absolute inset-0 h-full w-full" aria-hidden="true">
            <rect x="0" y="18" width="100%" height="1" fill="#222" />
            {barNumbers(0, 120).map(i => <rect key={i} x={i * 20} y="30" width="1" height="8" fill="#7a7a7a" />)}
            {barNumbers(0, 30).map(i => <rect key={i} x={60 + i * 80} y="3" width="1" height="35" fill="#7a7a7a" />)}
          </svg>
          <div className="flex pl-[64px] text-[13px] leading-[17px] text-[#dcdcdc]">
            {barNumbers(39, 14).map(n => <span key={n} className="w-20 shrink-0">{n}</span>)}
          </div>
        </div>
        {tracks.map((t, i) => <Lane key={t.name} track={t} index={i} />)}
        <div className="min-h-[313px]" />
        <div className="absolute bottom-0.5 left-[602px] top-5 flex flex-col items-center">
          <PlayheadMarker />
          <span className="w-px flex-1 bg-white shadow-[0_0_0_1px_rgba(0,0,0,0.35)]" />
        </div>
      </div>
    </div>
  </section>
);

/* ---------- piano roll ---------- */

const velocityColors = ['#42b06a', '#42b549', '#58b541', '#6cb542', '#8cb342', '#a5b242', '#b3a342', '#b57c42'];
const velocityWidth = [0.5, 0.58, 0.62, 0.66, 0.69, 0.72, 0.78, 0.84];

// start, end, semitones below C6, velocity step
const rollNotes: [number, number, number, number][] = [
  [-10, 34, 7, 3], [53, 123, 9, 4], [133, 145, 9, 3], [143, 205, 10, 1], [33, 56, 12, 5], [123, 137, 12, 6],
  [253, 276, 9, 6], [273, 294, 7, 6], [293, 316, 5, 5], [313, 329, 7, 5], [333, 354, 7, 7], [353, 376, 12, 5],
  [373, 445, 9, 6], [443, 456, 12, 5], [453, 463, 9, 6], [463, 528, 10, 6],
  [573, 581, 4, 1], [583, 591, 4, 1], [593, 613, 4, 3], [613, 621, 5, 3], [623, 655, 5, 1], [653, 661, 7, 3], [663, 698, 7, 2],
  [733, 775, 5, 2], [773, 794, 7, 1], [793, 814, 9, 3], [813, 868, 12, 2], [893, 994, 12, 5], [893, 994, 0, 5],
  [973, 1014, 9, 3], [1013, 1031, 7, 1], [1033, 1054, 7, 1],
  [-10, 35, 19, 2], [53, 123, 21, 3], [133, 141, 21, 3], [143, 207, 22, 1], [33, 54, 24, 1], [123, 136, 24, 0],
  [253, 274, 21, 4], [273, 294, 19, 3], [293, 317, 17, 2], [313, 329, 19, 1], [333, 355, 19, 1], [353, 374, 24, 3],
  [373, 445, 21, 5], [443, 455, 24, 3], [453, 462, 21, 3], [463, 530, 22, 3],
  [573, 581, 16, 3], [583, 591, 16, 1], [593, 613, 16, 3], [613, 621, 17, 3], [623, 653, 17, 1], [653, 661, 19, 3], [663, 701, 19, 1],
  [733, 774, 17, 0], [773, 797, 19, 1], [793, 813, 21, 2], [813, 872, 24, 2],
  [973, 1013, 21, 5], [1013, 1031, 19, 0], [1033, 1054, 19, 0],
];

const isBlack = (below: number) => [2, 4, 6, 9, 11].includes(below % 12);
const rows = barNumbers(0, 38);

const Slider: React.FC<{ label: string; value: number; max: number; pos: number }> = ({ label, value, max, pos }) => (
  <label className="block text-[13px] leading-4 text-[#b9b9b9]">
    <span className="flex justify-between">{label}<span className="font-semibold text-white">{value}</span></span>
    <input type="range" min={0} max={max} defaultValue={pos} className="mt-1 block h-5 w-full appearance-none bg-[linear-gradient(#414141,#414141)] bg-[length:100%_4px] bg-center bg-no-repeat [&::-webkit-slider-thumb]:h-5 [&::-webkit-slider-thumb]:w-5 [&::-webkit-slider-thumb]:appearance-none [&::-webkit-slider-thumb]:rounded-full [&::-webkit-slider-thumb]:bg-[#979797]" />
  </label>
);

const QuantizePanel = () => (
  <div className="w-[187px] shrink-0 bg-[#575757] text-[13px] text-[#b9b9b9]">
    <div className="flex h-[167px] flex-col border-b border-[#454545] pl-5 pr-5 pt-[11px]">
      <span className="leading-4">Time Quantize (classic)</span>
      <div className="mb-[9px] mt-1 flex gap-2">
        <Picker label="Time quantize" value="1/16 Note" className="w-[105px]" arrows="right-1.5" />
        <button className={`h-5 w-[33px] text-xs font-semibold text-white ${raised}`}>Q</button>
      </div>
      <div className="flex flex-col gap-[9px]">
        <Slider label="Strength" value={100} max={100} pos={100} />
        <Slider label="Swing" value={50} max={100} pos={50} />
      </div>
    </div>
    <div className="flex h-[89px] flex-col border-b border-[#454545] pl-5 pr-5 pt-3">
      <span className="leading-4">Scale Quantize</span>
      <div className="mt-1 flex gap-2">
        <Picker label="Scale root" value="Off" className="w-[50px]" arrows="right-1.5" />
        <Picker label="Scale type" value="..." className="w-[47px]" arrows="right-1.5" />
        <button className={`h-5 w-[33px] text-xs font-semibold text-white ${raised}`}>Q</button>
      </div>
      <label className="mt-[9px] flex items-center gap-1.5 pl-1 leading-4">
        <input type="checkbox" className="h-3.5 w-3.5 appearance-none rounded-[3px] bg-[#616161] shadow-[0_0_1px_#222]" />
        Snap To Scale
      </label>
    </div>
    <div className="px-5 pt-3"><Slider label="Velocity" value={80} max={127} pos={78} /></div>
  </div>
);

const Keyboard = () => (
  <svg width="22" height="579" viewBox="0 0 22 579" className="block shrink-0" aria-label="Keyboard">
    <rect width="22" height="579" fill="#dedddf" />
    {barNumbers(0, 22).map(i => <rect key={i} x="0" y={Math.round(7 + (i * 192) / 7)} width="22" height="1" fill="#3a3a3a" />)}
    {rows.filter(isBlack).map(r => <rect key={r} x="0" y={16 * r - 8} width="10" height="14" fill="#1d1d1d" />)}
    {[6, 5, 4, 3].map((o, i) => <text key={o} x="3" y={192 * i + 3} fontSize="12" fontWeight="600" fill="#444">{`C${o}`}</text>)}
    <rect x="21" y="0" width="1" height="579" fill="#555" />
  </svg>
);

const EditorToolbar = () => (
  <div className="flex h-[37px] items-center bg-[#464646] pl-2.5">
    <MenuBar />
    <ToolButton label="Collapse mode" className={`ml-[9px] w-[33px] text-[#ddd] ${raised}`}><Icon><path d="M3.5 9h11" strokeWidth="2" strokeLinecap="butt" /><path d="m6.5 2.5 2.5 2.5 2.5-2.5M6.5 15.5 9 13l2.5 2.5" /></Icon></ToolButton>
    <ToolButton label="Automation" className={`ml-[9px] w-[33px] text-white ${raised}`}><AutomationIcon /></ToolButton>
    <div className={`ml-2 flex overflow-hidden text-[#ccc] ${raised}`}>
      <ToolButton label="MIDI in" className="w-8"><Icon w={22}><path d="m2 6 3 3-3 3M11 14.5a6 6 0 1 1 6 0l-1-1.5h-4z" /><path d="M10.5 9h.1M12 6.8h.1M14 6h.1M16 6.8h.1M17.5 9h.1" strokeWidth="1.7" /></Icon></ToolButton>
      <ToolButton label="MIDI out" className="w-8 bg-[#25913b]"><Icon w={22}><path d="m17 6 3 3-3 3M5 14.5a6 6 0 1 1 6 0l-1-1.5H6z" /><path d="M4.5 9h.1M6 6.8h.1M8 6h.1M10 6.8h.1M11.5 9h.1" strokeWidth="1.7" /></Icon></ToolButton>
    </div>
    <ToolButton label="Catch playhead" className="ml-[9px] w-[33px] rounded-[5px] bg-[#2a6fbd] text-white"><CatchIcon /></ToolButton>
    <ToolButton label="Link" className="ml-[9px] w-[33px] rounded-[5px] bg-[#b98e2d] text-[#eee]"><Icon><g transform="rotate(-45 9 9)"><rect x="1" y="6" width="9" height="6" rx="3" /><rect x="8" y="6" width="9" height="6" rx="3" /></g></Icon></ToolButton>
    <span className="grow-[8]" />
    <PointerTools second={<PencilIcon />} />
    <span className="grow-[5]" />
    <output className="h-5 w-[125px] whitespace-pre rounded-[5px] bg-[#3b3b3b] pl-1 text-center text-[13px] leading-5 text-[#a6a6a6]">D♯5   46 2 1 1</output>
    <span className="ml-[10px] text-xs font-medium text-[#b4b4b4]">Snap:</span>
    <Picker label="Editor snap" value="Smart" className="ml-1.5 w-[176px]" />
    <ToolButton label="Fit width" className={`ml-2 w-[34px] text-[#ddd] ${raised}`}><WidthIcon /></ToolButton>
    <div className="ml-[7px]"><ZoomSlider /></div>
  </div>
);

const PianoRoll = () => (
  <section className="flex shrink-0 flex-col bg-[#464646]">
    <nav className="flex h-[37px] items-center justify-center border-b border-[#3e3e3e] pl-[131px]">
      <div className="flex h-[22px] items-center rounded-[5px] bg-[#3b3b3b] text-[13px] text-[#c8c8c8]">
        <button className="h-5 w-[126px] rounded-[5px] bg-[#2a6fbd] font-medium leading-5 text-white">Piano Roll</button>
        <button className="w-[129px] border-r border-[#333] leading-4">Score</button>
        <button className="w-[129px] leading-4">Smart Tempo</button>
      </div>
    </nav>
    <EditorToolbar />
    <div className="flex h-11">
      <div className="flex w-[329px] shrink-0 items-center gap-3 border-t border-[#3e3e3e] pl-2.5 pr-2.5">
        <span className="w-8 -rotate-[22deg]"><Instrument kind="darkViolin" /></span>
        <div className="text-[11px] leading-[15px] text-[#bcbcbc]"><div className="text-xs font-semibold leading-[15px] text-white">Violin 2</div>on Track Violin 2</div>
        <ToolButton label="Region archive" className={`ml-auto w-[33px] text-white ${raised}`}><ArchiveIcon /></ToolButton>
      </div>
      <div className="relative min-w-0 flex-1 overflow-hidden bg-[#343434]">
        <div className="-ml-1 flex h-[23px] border-b border-black text-[13px] leading-[17px] text-[#dcdcdc]">
          {barNumbers(42, 15).map(n => <span key={n} className="w-20 shrink-0">{n}</span>)}
        </div>
        <div className="h-[21px] bg-[#c0ffca] pl-[133px] text-[11px] font-medium leading-[18px] text-[#17692a]">Violin 2</div>
        <svg className="absolute inset-0 h-full w-full" aria-hidden="true">
          {barNumbers(1, 120).map(i => {
            const x = -7 + i * 20;
            return i % 4 ? <rect key={i} x={x} y="36" width="1" height="8" fill="#8cc395" /> : (
              <g key={i}><rect x={x} y="3" width="1" height="19" fill="#7a7a7a" /><rect x={x} y="23" width="1" height="21" fill="#98cfa1" /></g>
            );
          })}
        </svg>
        <div className="absolute left-[295px] top-[22px]"><PlayheadMarker light /></div>
      </div>
    </div>
    <div className="flex h-[579px]">
      <QuantizePanel />
      <Keyboard />
      <div className="w-[120px] shrink-0 bg-[#212121]" />
      <svg className="h-full min-w-0 flex-1 bg-[#2d2d2d]" aria-label="Notes">
        {rows.map(r => (
          <g key={r}>
            {isBlack(r) && <rect x="0" y={16 * r - 9} width="100%" height="16" fill="#232323" />}
            {(r % 12 === 0 || r % 12 === 7) && <rect x="0" y={16 * r + 6} width="100%" height="1" fill="#383838" />}
          </g>
        ))}
        {barNumbers(0, 120).map(i => <rect key={i} x={13 + i * 20} y="0" width="1" height="579" fill="#4b4b4b" />)}
        {rollNotes.map(([a, b, row, v], i) => (
          <g key={i}>
            <rect x={a + 0.5} y={16 * row - 9.5} width={b - a - 1} height="16" fill={velocityColors[v]} stroke="#000" />
            <rect x={a + 5} y={16 * row - 2} width={Math.max(1, Math.round((b - a - 8) * velocityWidth[v]))} height="2" fill={v > 5 ? '#f3dc92' : v === 0 ? '#a9f3b4' : '#dcf890'} />
          </g>
        ))}
        <rect x="302" y="0" width="3" height="579" fill="#000" opacity=".35" />
        <rect x="303" y="0" width="1" height="579" fill="#fff" />
      </svg>
    </div>
  </section>
);

export default function App() {
  return (
    <div className="flex min-h-screen flex-col overflow-hidden bg-[#303030] font-[Inter,sans-serif]">
      <TopBar />
      <div className="flex flex-1">
        <Inspector />
        <main className="flex min-w-0 flex-1 flex-col">
          <TracksArea />
          <PianoRoll />
        </main>
      </div>
    </div>
  );
}
